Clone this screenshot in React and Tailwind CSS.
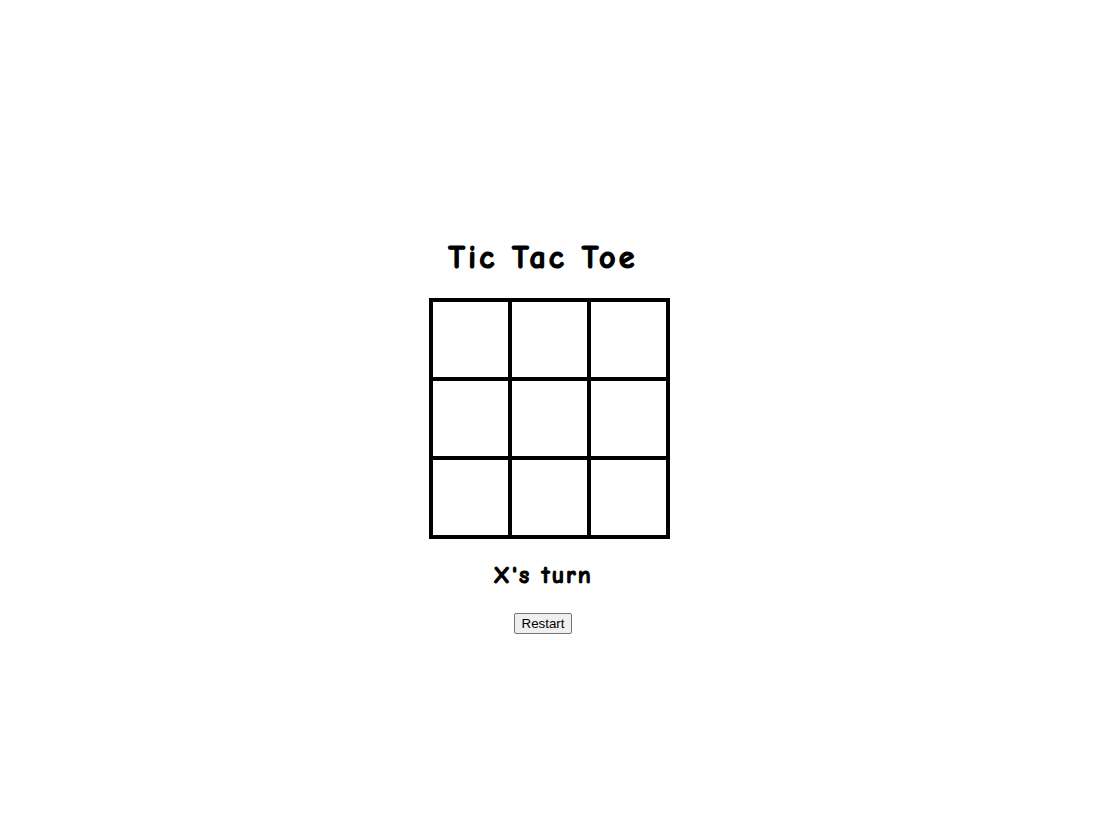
export default function App() {
  const cells = Array.from({ length: 9 });
  return (
    <div className="w-[1110px] h-[834px] bg-white">
      <div className="pt-[238px] ml-[443px] w-[200px] flex flex-col items-center font-['Comic_Sans_MS','Comic_Neue','Open_Sans',sans-serif] text-black">
        <h1 className="text-[32px] leading-[40px] font-bold whitespace-nowrap tracking-[3.2px] [-webkit-text-stroke:1.2px_black]">Tic Tac Toe</h1>
        <div className="mt-[20px] ml-[12px] grid grid-cols-3 gap-[4px] p-[4px] bg-black w-[241px] h-[241px]">
          {cells.map((_, i) => (
            <div key={i} className="bg-white" />
          ))}
        </div>
        <div className="mt-[21px] text-[24px] leading-[30px] font-bold whitespace-nowrap tracking-[2px] [-webkit-text-stroke:1px_black]">X's turn</div>
        <button className="mt-[23px] h-[21px] px-[7px] text-[13.33px] leading-[15px] font-['Liberation_Sans',Arial,sans-serif] bg-[#efefef] border border-[#767676] rounded-[2px] text-black">
          Restart
        </button>
      </div>
    </div>
  );
}
